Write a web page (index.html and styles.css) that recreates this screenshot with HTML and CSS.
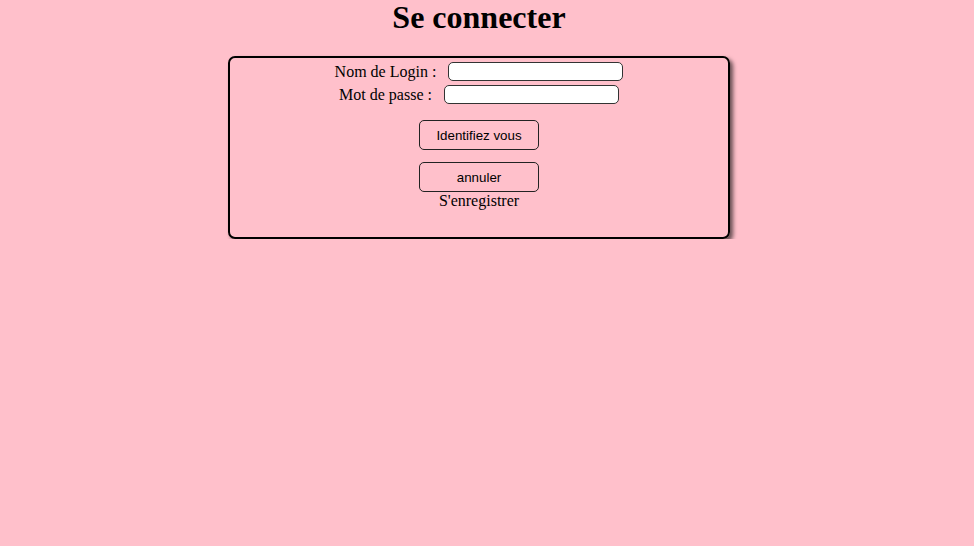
FILE: index.html
```html
<!DOCTYPE html>
<html lang="fr">
<head>
<meta charset="utf-8">
<title>Se connecter</title>
<link rel="stylesheet" href="styles.css">
</head>
<body>
<div class="page">
  <h1 class="title">Se connecter</h1>
  <form class="box">
    <div class="row">
      <label class="label" for="login">Nom de Login :</label>
      <input class="field" type="text" id="login">
    </div>
    <div class="row">
      <label class="label" for="pass">Mot de passe :</label>
      <input class="field" type="password" id="pass">
    </div>
    <div class="actions">
      <button class="btn" type="submit">Identifiez vous</button>
      <button class="btn" type="reset">annuler</button>
      <a class="register">S'enregistrer</a>
    </div>
  </form>
</div>
</body>
</html>
```

FILE: styles.css
```css
html, body {
  margin: 0;
  padding: 0;
  background: #ffc0cb;
}
body {
  font-family: "Liberation Serif", "Times New Roman", serif;
  font-size: 16px;
  color: #000;
}
.page {
  width: 958px;
  display: flex;
  flex-direction: column;
  align-items: center;
}
.title {
  margin: 0;
  font-size: 32px;
  font-weight: bold;
  line-height: 34px;
  text-align: center;
}
.box {
  margin-top: 22px;
  width: 498px;
  border: 2px solid #000;
  border-radius: 7px;
  box-shadow: 3px 3px 4px rgba(0, 0, 0, 0.6);
  padding: 4px 0 27px;
  display: flex;
  flex-direction: column;
  align-items: center;
}
.row {
  display: flex;
  align-items: center;
  justify-content: center;
  gap: 12px;
  height: 19px;
  margin-bottom: 4px;
}
.label {
  line-height: 18px;
}
.field {
  box-sizing: border-box;
  width: 175px;
  height: 19px;
  margin: 0;
  padding: 0 4px;
  border: 1px solid #333;
  border-radius: 5px;
  background: #fff;
}
.actions {
  margin-top: 12px;
  display: flex;
  flex-direction: column;
  align-items: center;
}
.btn {
  box-sizing: border-box;
  width: 120px;
  height: 30px;
  margin: 0 0 12px;
  padding: 0;
  border: 1px solid #222;
  border-radius: 5px;
  background: transparent;
  font-family: "Liberation Sans", Arial, sans-serif;
  font-size: 13.33px;
  color: #000;
}
.btn + .btn {
  margin-bottom: 0;
}
.register {
  line-height: 18px;
  color: #000;
}
```
